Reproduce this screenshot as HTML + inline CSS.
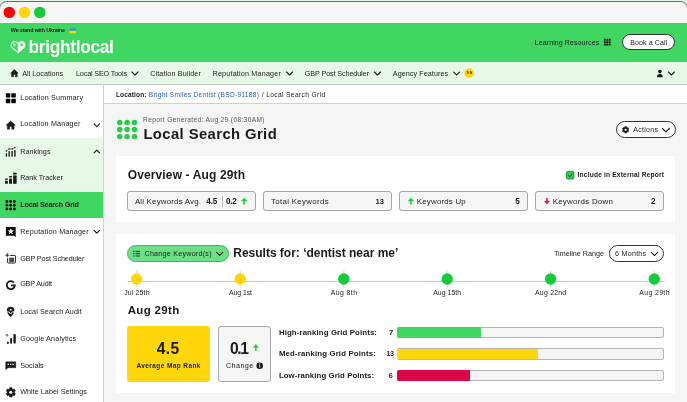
<!DOCTYPE html>
<html lang="en"><head><meta charset="utf-8"><title>BrightLocal - Local Search Grid</title>
<style>
html,body{margin:0;padding:0}
body{width:687px;height:402px;position:relative;overflow:hidden;background:#e3f8e6;font-family:"Liberation Sans",sans-serif;}
.b{position:absolute}
.t{position:absolute;white-space:nowrap;line-height:1}
svg{position:absolute;left:0;top:0}
</style></head><body>
<div class="b" style="left:-0.7px;top:1px;width:688.40px;height:403.00px;background:#f5f5f5;border:1.4px solid #686868;border-radius:7.5px 7.5px 0 0;box-sizing:border-box;"></div>
<div class="b" style="left:0.4px;top:22.7px;width:686.20px;height:39.10px;background:#3fd761;"></div>
<div class="b" style="left:0.4px;top:61.8px;width:686.20px;height:22.80px;background:#e6f9e9;border-bottom:1px solid #c4c9c4;box-sizing:border-box"></div>
<div class="b" style="left:0.4px;top:84.6px;width:102.80px;height:317.40px;background:#fff;"></div>
<div class="b" style="left:0.4px;top:138.2px;width:102.80px;height:53.50px;background:#e6f9e9;"></div>
<div class="b" style="left:0.4px;top:191.7px;width:102.80px;height:26.60px;background:#3fd761;"></div>
<div class="b" style="left:103.2px;top:84.6px;width:0.90px;height:317.40px;background:#d2d2d2;"></div>
<div class="b" style="left:103.8px;top:84.6px;width:582.80px;height:317.40px;background:#f5f5f5;"></div>
<div class="b" style="left:103.8px;top:84.6px;width:582.80px;height:19.30px;background:#fff;border-bottom:1px solid #d0d0d0;box-sizing:border-box"></div>
<div class="b" style="left:115.7px;top:155.5px;width:559.70px;height:66.80px;background:#fff;"></div>
<div class="b" style="left:115.7px;top:233.8px;width:559.70px;height:159.00px;background:#fff;"></div>
<div class="b" style="left:622px;top:34.3px;width:53.30px;height:16.10px;background:#fff;border:0.8px solid #333;border-radius:20px;box-sizing:border-box;"></div>
<div class="b" style="left:615.8px;top:121.4px;width:60.10px;height:16.80px;background:#fff;border:0.8px solid #333;border-radius:20px;box-sizing:border-box;"></div>
<div class="b" style="left:609.3px;top:245.4px;width:54.70px;height:16.60px;background:#fff;border:0.8px solid #333;border-radius:20px;box-sizing:border-box;"></div>
<div class="b" style="left:126.8px;top:245.4px;width:102.20px;height:16.60px;background:#6be087;border:0.8px solid #3db85b;border-radius:20px;box-sizing:border-box;"></div>
<div class="b" style="left:127.1px;top:191.3px;width:128.70px;height:19.80px;background:#f5f5f5;border:0.9px solid #a6a6a6;border-radius:3px;box-sizing:border-box;"></div>
<div class="b" style="left:263.2px;top:191.3px;width:128.60px;height:19.80px;background:#f5f5f5;border:0.9px solid #a6a6a6;border-radius:3px;box-sizing:border-box;"></div>
<div class="b" style="left:399.2px;top:191.3px;width:128.50px;height:19.80px;background:#f5f5f5;border:0.9px solid #a6a6a6;border-radius:3px;box-sizing:border-box;"></div>
<div class="b" style="left:535px;top:191.3px;width:129.00px;height:19.80px;background:#f5f5f5;border:0.9px solid #a6a6a6;border-radius:3px;box-sizing:border-box;"></div>
<div class="b" style="left:222px;top:195.6px;width:0.70px;height:11.20px;background:#bdbdbd;"></div>
<div class="b" style="left:127.1px;top:326.1px;width:82.90px;height:55.70px;background:#ffd60a;border-radius:3px"></div>
<div class="b" style="left:217.9px;top:326.1px;width:53.30px;height:55.70px;background:#f5f5f5;border:0.9px solid #a6a6a6;border-radius:3px;box-sizing:border-box;"></div>
<div class="b" style="left:397.2px;top:326.9px;width:266.70px;height:11.30px;background:#f5f5f5;border:0.8px solid #b4b4b4;border-radius:2px;box-sizing:border-box;overflow:hidden"></div>
<div class="b" style="left:397.3px;top:327.0px;width:84.00px;height:11.00px;background:#3fd761;border-radius:2px 0 0 2px"></div>
<div class="b" style="left:397.2px;top:348.4px;width:266.70px;height:11.20px;background:#f5f5f5;border:0.8px solid #b4b4b4;border-radius:2px;box-sizing:border-box;overflow:hidden"></div>
<div class="b" style="left:397.3px;top:348.5px;width:140.80px;height:10.90px;background:#ffd60a;border-radius:2px 0 0 2px"></div>
<div class="b" style="left:397.2px;top:369.8px;width:266.70px;height:11.20px;background:#f5f5f5;border:0.8px solid #b4b4b4;border-radius:2px;box-sizing:border-box;overflow:hidden"></div>
<div class="b" style="left:397.3px;top:369.90000000000003px;width:73.10px;height:10.90px;background:#dd0048;border-radius:2px 0 0 2px"></div>
<svg width="687" height="402" viewBox="0 0 687 402">
<circle cx="9.3" cy="12.4" r="5.7" fill="#ff0000"/>
<circle cx="24.6" cy="12.4" r="5.7" fill="#ffd60a"/>
<circle cx="39.8" cy="12.4" r="5.7" fill="#12cc3a"/>
<rect x="69.5" y="28.5" width="6.4" height="2.4" rx="0.6" fill="#3b82f6"/>
<rect x="69.5" y="30.8" width="6.4" height="2.4" rx="0.6" fill="#ffd60a"/>
<path d="M18.1 43.9 C17.3 41.7 14.9 41.1 13 42 C10.8 43.1 10.6 46 12.3 47.9 L18.1 52.7" fill="none" stroke="#fff" stroke-width="1.1" stroke-linejoin="round"/>
<path d="M18.1 43.7 C18.9 41.5 21.4 40.9 23.3 41.8 C25.6 42.9 25.8 46 24 48 L18.1 53.1 Z" fill="#fff" stroke="#fff" stroke-width="0.5" stroke-linejoin="round"/>
<circle cx="21.6" cy="44.9" r="1.35" fill="#3fd761"/>
<circle cx="14.5" cy="45" r="1.05" fill="none" stroke="#fff" stroke-width="0.6"/>
<rect x="603.90" y="38.80" width="1.9" height="1.9" fill="#1a1a1a"/>
<rect x="603.90" y="41.20" width="1.9" height="1.9" fill="#1a1a1a"/>
<rect x="603.90" y="43.60" width="1.9" height="1.9" fill="#1a1a1a"/>
<rect x="606.30" y="38.80" width="1.9" height="1.9" fill="#1a1a1a"/>
<rect x="606.30" y="41.20" width="1.9" height="1.9" fill="#1a1a1a"/>
<rect x="606.30" y="43.60" width="1.9" height="1.9" fill="#1a1a1a"/>
<rect x="608.70" y="38.80" width="1.9" height="1.9" fill="#1a1a1a"/>
<rect x="608.70" y="41.20" width="1.9" height="1.9" fill="#1a1a1a"/>
<rect x="608.70" y="43.60" width="1.9" height="1.9" fill="#1a1a1a"/>
<path d="M10.6 73.2 L14.4 69.6 L18.2 73.2 L17.2 73.2 L17.2 76.8 L15.3 76.8 L15.3 74.4 L13.5 74.4 L13.5 76.8 L11.6 76.8 L11.6 73.2 Z" fill="#1a1a1a" stroke="#1a1a1a" stroke-width="0.5" stroke-linejoin="round"/>
<path d="M131.95 72.00 L134.95 75.00 L137.95 72.00" fill="none" stroke="#1a1a1a" stroke-width="1.1" stroke-linecap="round" stroke-linejoin="round"/>
<path d="M286.55 72.00 L289.55 75.00 L292.55 72.00" fill="none" stroke="#1a1a1a" stroke-width="1.1" stroke-linecap="round" stroke-linejoin="round"/>
<path d="M374.45 72.00 L377.45 75.00 L380.45 72.00" fill="none" stroke="#1a1a1a" stroke-width="1.1" stroke-linecap="round" stroke-linejoin="round"/>
<path d="M453.65 72.02 L456.60 74.98 L459.55 72.02" fill="none" stroke="#1a1a1a" stroke-width="1.1" stroke-linecap="round" stroke-linejoin="round"/>
<path d="M668.45 72.00 L671.45 75.00 L674.45 72.00" fill="none" stroke="#1a1a1a" stroke-width="1.1" stroke-linecap="round" stroke-linejoin="round"/>
<circle cx="469.2" cy="73.1" r="4.9" fill="#ffd60a"/>
<circle cx="659.9" cy="71.6" r="1.8" fill="#1a1a1a"/>
<path d="M657 77.2 A2.9 3.2 0 0 1 662.8 77.2 Z" fill="#1a1a1a"/>
<path d="M94.05 123.92 L96.80 126.67 L99.55 123.92" fill="none" stroke="#1a1a1a" stroke-width="1.15" stroke-linecap="round" stroke-linejoin="round"/>
<path d="M94.05 152.88 L96.80 150.12 L99.55 152.88" fill="none" stroke="#1a1a1a" stroke-width="1.15" stroke-linecap="round" stroke-linejoin="round"/>
<path d="M94.05 230.43 L96.80 233.18 L99.55 230.43" fill="none" stroke="#1a1a1a" stroke-width="1.15" stroke-linecap="round" stroke-linejoin="round"/>
<rect x="5.8" y="93.2" width="4.5" height="4.4" rx="0.6" fill="#000"/>
<rect x="11.3" y="93.2" width="4.5" height="4.4" rx="0.6" fill="#000"/>
<rect x="5.8" y="98.8" width="4.5" height="4.4" rx="0.6" fill="#000"/>
<rect x="11.3" y="98.8" width="4.5" height="4.4" rx="0.6" fill="#000"/>
<path d="M6.1 125.2 L10.7 121 L15.3 125.2 L14.1 125.2 L14.1 129.2 L11.8 129.2 L11.8 126.4 L9.6 126.4 L9.6 129.2 L7.3 129.2 L7.3 125.2 Z" fill="#1a1a1a" stroke="#1a1a1a" stroke-width="0.5" stroke-linejoin="round"/>
<rect x="5.7" y="153.2" width="1.4" height="3.5" rx="0.4" fill="#1a1a1a"/>
<rect x="8.5" y="151.0" width="1.4" height="5.7" rx="0.4" fill="#1a1a1a"/>
<rect x="11.4" y="151.0" width="1.4" height="5.7" rx="0.4" fill="#1a1a1a"/>
<rect x="14.2" y="149.9" width="1.4" height="6.8" rx="0.4" fill="#1a1a1a"/>
<path d="M6.3 151.1 L9.1 148.9 L12.1 148.9 L15 147.4" fill="none" stroke="#1a1a1a" stroke-width="0.5"/>
<circle cx="6.3" cy="151.1" r="0.75" fill="#1a1a1a"/>
<circle cx="9.1" cy="148.9" r="0.75" fill="#1a1a1a"/>
<circle cx="12.1" cy="148.9" r="0.75" fill="#1a1a1a"/>
<circle cx="15" cy="147.4" r="0.75" fill="#1a1a1a"/>
<rect x="5.1" y="178.6" width="2.7" height="5.2" rx="0.7" fill="#b9c4ba"/>
<rect x="5.1" y="178.6" width="2.7" height="1.2" rx="0.5" fill="#1a1a1a"/>
<rect x="5.1" y="181.0" width="2.7" height="2.8" rx="0.5" fill="#1a1a1a"/>
<rect x="9.1" y="175.9" width="2.9" height="7.9" rx="0.7" fill="#8c8f8c"/>
<rect x="9.1" y="175.9" width="2.9" height="1.2" rx="0.5" fill="#1a1a1a"/>
<rect x="9.1" y="179.1" width="2.9" height="4.7" rx="0.5" fill="#1a1a1a"/>
<rect x="13.2" y="172.8" width="3.3" height="11.0" rx="0.7" fill="#7c7e7c"/>
<rect x="13.2" y="172.8" width="3.3" height="1.2" rx="0.5" fill="#1a1a1a"/>
<rect x="13.2" y="175.7" width="3.3" height="8.1" rx="0.5" fill="#1a1a1a"/>
<circle cx="6.90" cy="201.50" r="1.45" fill="#111"/>
<circle cx="6.90" cy="205.22" r="1.45" fill="#111"/>
<circle cx="6.90" cy="208.94" r="1.45" fill="#111"/>
<circle cx="10.62" cy="201.50" r="1.45" fill="#111"/>
<circle cx="10.62" cy="205.22" r="1.45" fill="#111"/>
<circle cx="10.62" cy="208.94" r="1.45" fill="#111"/>
<circle cx="14.34" cy="201.50" r="1.45" fill="#111"/>
<circle cx="14.34" cy="205.22" r="1.45" fill="#111"/>
<circle cx="14.34" cy="208.94" r="1.45" fill="#111"/>
<path d="M5.9 227 H15.7 V237.2 L13.9 235.8 H5.9 Z" fill="#0c0c0c"/>
<path d="M10.80 228.20 L11.65 230.33 L13.94 230.48 L12.18 231.95 L12.74 234.17 L10.80 232.95 L8.86 234.17 L9.42 231.95 L7.66 230.48 L9.95 230.33 Z" fill="#fff"/>
<path d="M10.2 255.4 H14.7 a0.7 0.7 0 0 1 0.7 0.7 V262.3 a0.7 0.7 0 0 1 -0.7 0.7 H8.3 a0.7 0.7 0 0 1 -0.7 -0.7 V258.2" fill="none" stroke="#1a1a1a" stroke-width="1"/>
<rect x="9.2" y="257.7" width="4.8" height="4.4" fill="#4a4a4a"/>
<path d="M7.3 253.2 V257.2 M5.3 255.2 H9.3" stroke="#1a1a1a" stroke-width="0.9" fill="none"/>
<path d="M13.9 282.6 A4 4 0 1 0 14.8 285.4 H11" fill="none" stroke="#1a1a1a" stroke-width="1.8"/>
<path d="M10.6 306.7 A3.8 3.8 0 0 1 14.4 310.5 C14.4 313.4 10.6 317.2 10.6 317.2 C10.6 317.2 6.8 313.4 6.8 310.5 A3.8 3.8 0 0 1 10.6 306.7 Z" fill="#1a1a1a"/>
<path d="M6.4 311.9 L9 311.9 L10.6 314 L12.2 311.9 L14.8 311.9" fill="none" stroke="#fff" stroke-width="0.9"/>
<circle cx="10.6" cy="309.8" r="1.0" fill="#fff"/>
<rect x="13.4" y="334" width="2.4" height="9.7" rx="1.1" fill="#1a1a1a"/>
<rect x="10.2" y="338" width="1.9" height="5.7" rx="0.9" fill="#1a1a1a"/>
<rect x="6.9" y="341.8" width="1.9" height="1.9" rx="0.3" fill="#1a1a1a"/>
<circle cx="7" cy="335.2" r="0.95" fill="none" stroke="#1a1a1a" stroke-width="0.6"/>
<path d="M5.7 361.8 H15.8 V367.7 H8 L5.7 369.8 Z" fill="#1a1a1a" stroke="#1a1a1a" stroke-width="0.4" stroke-linejoin="round"/>
<rect x="7.6000000000000005" y="363.7" width="1.4" height="1.2" fill="#fff"/>
<rect x="10.0" y="363.7" width="1.4" height="1.2" fill="#fff"/>
<rect x="12.4" y="363.7" width="1.4" height="1.2" fill="#fff"/>
<path d="M11.99 396.95 L9.61 396.95 L9.46 395.69 L8.53 395.16 L7.37 395.66 L6.18 393.59 L7.19 392.83 L7.19 391.77 L6.18 391.01 L7.37 388.94 L8.53 389.44 L9.46 388.91 L9.61 387.65 L11.99 387.65 L12.14 388.91 L13.07 389.44 L14.23 388.94 L15.42 391.01 L14.41 391.77 L14.41 392.83 L15.42 393.59 L14.23 395.66 L13.07 395.16 L12.14 395.69 Z" fill="#1a1a1a" stroke="#1a1a1a" stroke-width="0.6" stroke-linejoin="round"/>
<circle cx="10.8" cy="392.3" r="1.5" fill="#fff"/>
<circle cx="119.70" cy="122.40" r="2.7" fill="#1ed041"/>
<circle cx="119.70" cy="129.50" r="2.7" fill="#1ed041"/>
<circle cx="119.70" cy="136.60" r="2.7" fill="#1ed041"/>
<circle cx="127.10" cy="122.40" r="2.7" fill="#1ed041"/>
<circle cx="127.10" cy="129.50" r="2.7" fill="#1ed041"/>
<circle cx="127.10" cy="136.60" r="2.7" fill="#1ed041"/>
<circle cx="134.50" cy="122.40" r="2.7" fill="#1ed041"/>
<circle cx="134.50" cy="129.50" r="2.7" fill="#1ed041"/>
<circle cx="134.50" cy="136.60" r="2.7" fill="#1ed041"/>
<path d="M626.42 133.00 L624.78 133.00 L624.68 132.13 L624.04 131.77 L623.24 132.11 L622.42 130.69 L623.12 130.17 L623.12 129.43 L622.42 128.91 L623.24 127.49 L624.04 127.83 L624.68 127.47 L624.78 126.60 L626.42 126.60 L626.52 127.47 L627.16 127.83 L627.96 127.49 L628.78 128.91 L628.08 129.43 L628.08 130.17 L628.78 130.69 L627.96 132.11 L627.16 131.77 L626.52 132.13 Z" fill="#1a1a1a" stroke="#1a1a1a" stroke-width="0.6" stroke-linejoin="round"/>
<circle cx="625.6" cy="129.8" r="1.1" fill="#fff"/>
<path d="M662.45 128.48 L665.90 131.92 L669.35 128.48" fill="none" stroke="#1a1a1a" stroke-width="1.15" stroke-linecap="round" stroke-linejoin="round"/>
<path d="M244.15 198.04 L246.90 201.06 L244.75 201.06 L244.75 204.36 L243.55 204.36 L243.55 201.06 L241.40 201.06 Z" fill="#22c840" stroke="#22c840" stroke-width="0.5" stroke-linejoin="round"/>
<path d="M410.85 198.04 L413.60 201.06 L411.46 201.06 L411.46 204.36 L410.25 204.36 L410.25 201.06 L408.10 201.06 Z" fill="#22c840" stroke="#22c840" stroke-width="0.5" stroke-linejoin="round"/>
<path d="M546.90 204.07 L549.40 201.32 L547.45 201.32 L547.45 198.32 L546.35 198.32 L546.35 201.32 L544.40 201.32 Z" fill="#e0094a" stroke="#e0094a" stroke-width="0.5" stroke-linejoin="round"/>
<rect x="566.3" y="171.4" width="7.6" height="7.6" rx="1.6" fill="#2fd052" stroke="#12782a" stroke-width="0.8"/>
<path d="M568.2 175.3 L569.7 176.9 L572.2 173.7" fill="none" stroke="#0b3d16" stroke-width="0.9" stroke-linecap="round" stroke-linejoin="round"/>
<rect x="133.1" y="250.90" width="1.5" height="1.0" fill="#1d3d25"/><rect x="135.5" y="250.90" width="4.5" height="1.0" fill="#1d3d25"/>
<rect x="133.1" y="253.20" width="1.5" height="1.0" fill="#1d3d25"/><rect x="135.5" y="253.20" width="4.5" height="1.0" fill="#1d3d25"/>
<rect x="133.1" y="255.50" width="1.5" height="1.0" fill="#1d3d25"/><rect x="135.5" y="255.50" width="4.5" height="1.0" fill="#1d3d25"/>
<path d="M216.65 252.38 L219.70 255.43 L222.75 252.38" fill="none" stroke="#1a1a1a" stroke-width="1.1" stroke-linecap="round" stroke-linejoin="round"/>
<path d="M651.25 252.28 L654.50 255.53 L657.75 252.28" fill="none" stroke="#1a1a1a" stroke-width="1.1" stroke-linecap="round" stroke-linejoin="round"/>
<path d="M127.7 281.45 H663.7" stroke="#bcbcbc" stroke-width="0.9"/>
<path d="M136.7 270 V287.6" stroke="#c4c4c4" stroke-width="0.7"/>
<circle cx="136.7" cy="279" r="5.7" fill="#ffd60a"/>
<path d="M240.2 270 V287.6" stroke="#c4c4c4" stroke-width="0.7"/>
<circle cx="240.2" cy="279" r="5.7" fill="#ffd60a"/>
<path d="M343.8 270 V287.6" stroke="#c4c4c4" stroke-width="0.7"/>
<circle cx="343.8" cy="279" r="5.7" fill="#12cc3a"/>
<path d="M447.2 270 V287.6" stroke="#c4c4c4" stroke-width="0.7"/>
<circle cx="447.2" cy="279" r="5.7" fill="#12cc3a"/>
<path d="M550.6 270 V287.6" stroke="#c4c4c4" stroke-width="0.7"/>
<circle cx="550.6" cy="279" r="5.7" fill="#12cc3a"/>
<path d="M654.3 270 V287.6" stroke="#c4c4c4" stroke-width="0.7"/>
<circle cx="654.3" cy="279" r="5.7" fill="#12cc3a"/>
<path d="M255.85 344.57 L258.40 347.37 L256.41 347.37 L256.41 350.43 L255.29 350.43 L255.29 347.37 L253.30 347.37 Z" fill="#22c840" stroke="#22c840" stroke-width="0.5" stroke-linejoin="round"/>
<circle cx="259.7" cy="365.7" r="3.3" fill="#1a1a1a"/>
<rect x="259.25" y="365.1" width="0.9" height="2.4" fill="#fff"/><circle cx="259.7" cy="363.9" r="0.55" fill="#fff"/>
</svg>
<div id="tx" style="position:absolute;left:0;top:0;width:687px;height:402px;will-change:transform">
<span class="t" id="t0" style="left:10.80px;top:28.00px;font-size:5.4px;font-weight:700;color:#1a1a1a;letter-spacing:-0.161px">We stand with Ukraine</span>
<span class="t" id="t1" style="left:28.60px;top:39.00px;font-size:17.4px;font-weight:700;color:#fff;letter-spacing:-0.359px;transform:scaleY(1.1);transform-origin:0 85%">brightlocal</span>
<span class="t" id="t2" style="left:534.70px;top:39.00px;font-size:7px;font-weight:400;color:#1a1a1a;letter-spacing:0.108px">Learning Resources</span>
<span class="t" id="t3" style="left:630.20px;top:39.00px;font-size:7px;font-weight:400;color:#1a1a1a;letter-spacing:0.120px">Book a Call</span>
<span class="t" id="t4" style="left:22.20px;top:70.00px;font-size:7.2px;font-weight:400;color:#1a1a1a;letter-spacing:0.020px">All Locations</span>
<span class="t" id="t5" style="left:76.00px;top:70.00px;font-size:7.2px;font-weight:400;color:#1a1a1a;letter-spacing:-0.144px">Local SEO Tools</span>
<span class="t" id="t6" style="left:150.20px;top:70.00px;font-size:7.2px;font-weight:400;color:#1a1a1a;letter-spacing:0.130px">Citation Builder</span>
<span class="t" id="t7" style="left:212.50px;top:70.00px;font-size:7.2px;font-weight:400;color:#1a1a1a;letter-spacing:0.192px">Reputation Manager</span>
<span class="t" id="t8" style="left:304.80px;top:70.00px;font-size:7.2px;font-weight:400;color:#1a1a1a;letter-spacing:-0.100px">GBP Post Scheduler</span>
<span class="t" id="t9" style="left:392.80px;top:70.00px;font-size:7.2px;font-weight:400;color:#1a1a1a;letter-spacing:0.068px">Agency Features</span>
<span class="t" id="t10" style="left:466.60px;top:71.00px;font-size:4px;font-weight:700;color:#1a1a1a;letter-spacing:0.947px">99</span>
<span class="t" id="t11" style="left:20.20px;top:94.00px;font-size:7.2px;font-weight:400;color:#1a1a1a;letter-spacing:0.192px">Location Summary</span>
<span class="t" id="t12" style="left:20.20px;top:120.00px;font-size:7.2px;font-weight:400;color:#1a1a1a;letter-spacing:0.170px">Location Manager</span>
<span class="t" id="t13" style="left:20.20px;top:148.00px;font-size:7.2px;font-weight:400;color:#1a1a1a;letter-spacing:0.047px">Rankings</span>
<span class="t" id="t14" style="left:20.20px;top:174.00px;font-size:7.2px;font-weight:400;color:#1a1a1a;letter-spacing:-0.014px">Rank Tracker</span>
<span class="t" id="t15" style="left:20.20px;top:201.00px;font-size:7.2px;font-weight:700;color:#1a1a1a;letter-spacing:-0.170px">Local Search Grid</span>
<span class="t" id="t16" style="left:20.20px;top:228.00px;font-size:7.2px;font-weight:400;color:#1a1a1a;letter-spacing:0.198px">Reputation Manager</span>
<span class="t" id="t17" style="left:20.20px;top:255.00px;font-size:7.2px;font-weight:400;color:#1a1a1a;letter-spacing:-0.094px">GBP Post Scheduler</span>
<span class="t" id="t18" style="left:20.20px;top:280.00px;font-size:7.2px;font-weight:400;color:#1a1a1a;letter-spacing:-0.154px">GBP Audit</span>
<span class="t" id="t19" style="left:20.20px;top:308.00px;font-size:7.2px;font-weight:400;color:#1a1a1a;letter-spacing:0.092px">Local Search Audit</span>
<span class="t" id="t20" style="left:20.20px;top:335.00px;font-size:7.2px;font-weight:400;color:#1a1a1a;letter-spacing:0.164px">Google Analytics</span>
<span class="t" id="t21" style="left:20.20px;top:362.00px;font-size:7.2px;font-weight:400;color:#1a1a1a;letter-spacing:0.055px">Socials</span>
<span class="t" id="t22" style="left:20.20px;top:388.00px;font-size:7.2px;font-weight:400;color:#1a1a1a;letter-spacing:0.045px">White Label Settings</span>
<span class="t" id="t23" style="left:115.90px;top:92.00px;font-size:6.6px;font-weight:700;color:#1a1a1a;letter-spacing:0.116px">Location:</span>
<span class="t" id="t24" style="left:148.80px;top:92.00px;font-size:6.6px;font-weight:400;color:#2462d4;letter-spacing:0.283px">Bright Smiles Dentist (BSD-91188)</span>
<span class="t" id="t25" style="left:261.70px;top:92.00px;font-size:6.6px;font-weight:400;color:#1a1a1a;letter-spacing:0.391px">/ Local Search Grid</span>
<span class="t" id="t26" style="left:143.10px;top:117.00px;font-size:6.6px;font-weight:400;color:#555;letter-spacing:0.357px">Report Generated: Aug 29 (08:30AM)</span>
<span class="t" id="t27" style="left:143.40px;top:127.00px;font-size:14.8px;font-weight:700;color:#1a1a1a;letter-spacing:0.416px">Local Search Grid</span>
<span class="t" id="t28" style="left:633.30px;top:126.00px;font-size:7px;font-weight:400;color:#1a1a1a;letter-spacing:0.272px">Actions</span>
<span class="t" id="t29" style="left:127.70px;top:169.00px;font-size:12px;font-weight:700;color:#1a1a1a;letter-spacing:0.132px">Overview - Aug 29th</span>
<span class="t" id="t30" style="left:577.60px;top:172.00px;font-size:6.6px;font-weight:700;color:#1a1a1a;letter-spacing:0.187px">Include in External Report</span>
<span class="t" id="t31" style="left:134.90px;top:198.00px;font-size:7.9px;font-weight:400;color:#1a1a1a;letter-spacing:0.193px">All Keywords Avg.</span>
<span class="t" id="t32" style="left:206.30px;top:198.00px;font-size:8.2px;font-weight:700;color:#1a1a1a;letter-spacing:-0.195px">4.5</span>
<span class="t" id="t33" style="left:226.00px;top:198.00px;font-size:8.2px;font-weight:700;color:#1a1a1a;letter-spacing:-0.295px">0.2</span>
<span class="t" id="t34" style="left:271.00px;top:198.00px;font-size:7.9px;font-weight:400;color:#1a1a1a;letter-spacing:0.314px">Total Keywords</span>
<span class="t" id="t35" style="left:375.60px;top:198.00px;font-size:7.6px;font-weight:700;color:#1a1a1a;letter-spacing:-0.153px">13</span>
<span class="t" id="t36" style="left:416.80px;top:198.00px;font-size:7.9px;font-weight:400;color:#1a1a1a;letter-spacing:0.196px">Keywords Up</span>
<span class="t" id="t37" style="left:515.20px;top:198.00px;font-size:8.2px;font-weight:700;color:#1a1a1a;letter-spacing:0.000px">5</span>
<span class="t" id="t38" style="left:552.70px;top:198.00px;font-size:7.9px;font-weight:400;color:#1a1a1a;letter-spacing:0.265px">Keywords Down</span>
<span class="t" id="t39" style="left:651.10px;top:198.00px;font-size:8.2px;font-weight:700;color:#1a1a1a;letter-spacing:0.000px">2</span>
<span class="t" id="t40" style="left:144.50px;top:251.00px;font-size:7.1px;font-weight:400;color:#1a1a1a;letter-spacing:0.269px">Change Keyword(s)</span>
<span class="t" id="t41" style="left:233.30px;top:247.00px;font-size:12px;font-weight:700;color:#1a1a1a;letter-spacing:-0.013px">Results for: ‘dentist near me’</span>
<span class="t" id="t42" style="left:554.00px;top:250.00px;font-size:7.2px;font-weight:400;color:#1a1a1a;letter-spacing:-0.006px">Timeline Range</span>
<span class="t" id="t43" style="left:615.10px;top:250.00px;font-size:7.2px;font-weight:400;color:#1a1a1a;letter-spacing:0.217px">6 Months</span>
<span class="t" id="t44" style="left:124.20px;top:290.00px;font-size:6.9px;font-weight:400;color:#1a1a1a;letter-spacing:0.166px">Jul 25th</span>
<span class="t" id="t45" style="left:229.00px;top:290.00px;font-size:6.9px;font-weight:400;color:#1a1a1a;letter-spacing:-0.062px">Aug 1st</span>
<span class="t" id="t46" style="left:330.80px;top:290.00px;font-size:6.9px;font-weight:400;color:#1a1a1a;letter-spacing:0.406px">Aug 8th</span>
<span class="t" id="t47" style="left:433.20px;top:290.00px;font-size:6.9px;font-weight:400;color:#1a1a1a;letter-spacing:0.058px">Aug 15th</span>
<span class="t" id="t48" style="left:535.00px;top:290.00px;font-size:6.9px;font-weight:400;color:#1a1a1a;letter-spacing:0.241px">Aug 22nd</span>
<span class="t" id="t49" style="left:639.30px;top:290.00px;font-size:6.9px;font-weight:400;color:#1a1a1a;letter-spacing:0.372px">Aug 29th</span>
<span class="t" id="t50" style="left:127.70px;top:305.00px;font-size:11.5px;font-weight:700;color:#1a1a1a;letter-spacing:0.328px">Aug 29th</span>
<span class="t" id="t51" style="left:156.80px;top:341.00px;font-size:15.6px;font-weight:700;color:#1a1a1a;letter-spacing:0.356px">4.5</span>
<span class="t" id="t52" style="left:136.40px;top:363.00px;font-size:6.4px;font-weight:700;color:#1a1a1a;letter-spacing:0.470px">Average Map Rank</span>
<span class="t" id="t53" style="left:230.10px;top:341.00px;font-size:15.6px;font-weight:700;color:#1a1a1a;letter-spacing:-1.394px">0.1</span>
<span class="t" id="t54" style="left:226.00px;top:362.00px;font-size:7.2px;font-weight:400;color:#1a1a1a;letter-spacing:0.402px">Change</span>
<span class="t" id="t55" style="left:278.90px;top:329.00px;font-size:7.8px;font-weight:700;color:#1a1a1a;letter-spacing:0.134px">High-ranking Grid Points:</span>
<span class="t" id="t56" style="left:278.90px;top:350.00px;font-size:7.8px;font-weight:700;color:#1a1a1a;letter-spacing:0.168px">Med-ranking Grid Points:</span>
<span class="t" id="t57" style="left:278.90px;top:372.00px;font-size:7.8px;font-weight:700;color:#1a1a1a;letter-spacing:0.090px">Low-ranking Grid Points:</span>
<span class="t" id="t58" style="left:389.00px;top:329.00px;font-size:7.8px;font-weight:700;color:#2a2a2a;letter-spacing:0.000px">7</span>
<span class="t" id="t59" style="left:386.20px;top:350.00px;font-size:7.2px;font-weight:700;color:#2a2a2a;letter-spacing:-0.300px">13</span>
<span class="t" id="t60" style="left:388.60px;top:372.00px;font-size:7.8px;font-weight:700;color:#2a2a2a;letter-spacing:0.000px">6</span>
</div>
</body></html>
